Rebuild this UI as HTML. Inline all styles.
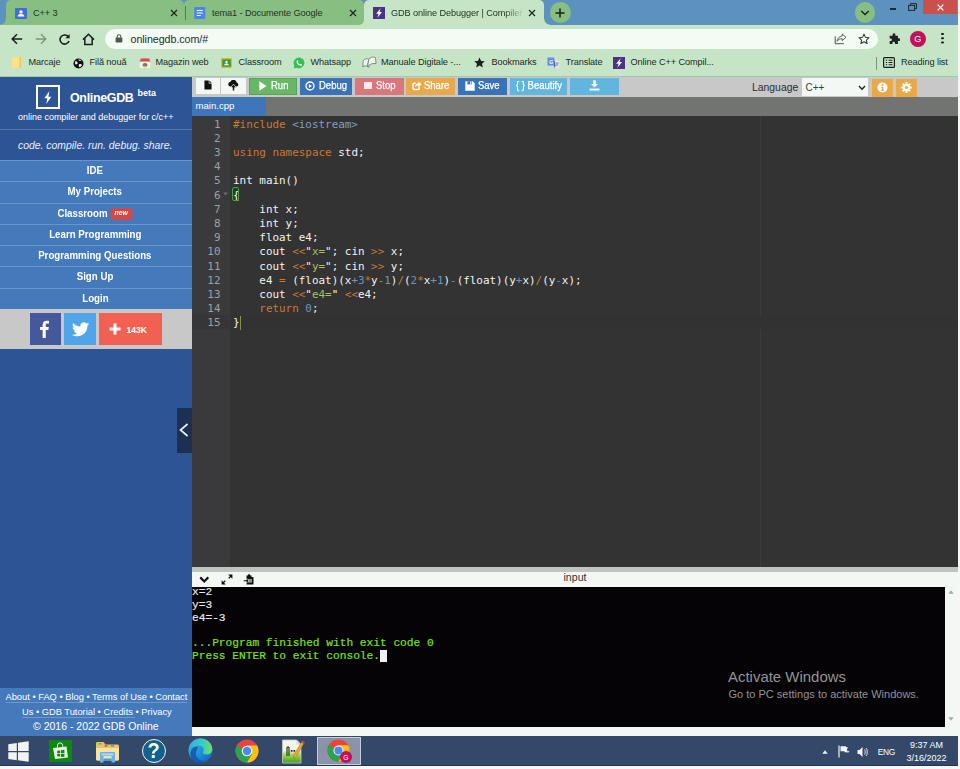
<!DOCTYPE html>
<html lang="en">
<head>
<meta charset="utf-8">
<title>GDB online Debugger | Compiler</title>
<style>
*{box-sizing:border-box;margin:0;padding:0}
html,body{width:960px;height:769px;overflow:hidden;background:#f5f8f5}
body{position:relative;font-family:"Liberation Sans",sans-serif;color:#222}
.abs{position:absolute}
.t{position:absolute;white-space:nowrap;line-height:1}
/* browser chrome */
#tabstrip{left:0;top:0;width:958px;height:26px;background:#5d92bf}
.tab{position:absolute;top:0;height:24.700px;background:#86bf81;border-radius:5px 5px 0 0}
.tab.active{background:#c6e5c6}
.tabtxt{position:absolute;top:7.700px;font-size:9.2px;color:#24331f;white-space:nowrap;line-height:11px;letter-spacing:-0.1px}
#toolbar{left:0;top:24.600px;width:958px;height:52.400px;background:#c6e5c6}
#omni{left:105px;top:28.5px;width:772.500px;height:20.5px;border-radius:10.5px;background:#f4faf4}
.bm{position:absolute;top:57.400px;font-size:9.2px;line-height:11px;color:#1d2a1d;white-space:nowrap;letter-spacing:-0.1px}
/* page */
#sidebar{left:0;top:77px;width:192px;height:659px;background:#2d5596}
#sidebar .menu{position:absolute;left:0;top:160px;width:192px}
.mi{position:absolute;left:0;width:192px;padding-right:2px;height:21.4px;background:#4479bb;border-top:1px solid #6a95ca;color:#fff;font-weight:bold;font-size:10.6px;text-align:center;line-height:19px;white-space:nowrap}
.mi>span{display:inline-block;transform:scaleX(0.917)}
#topbar{left:192px;top:77px;width:766px;height:19.900px;background:#c8c8c8}
.btn{position:absolute;top:78px;height:17px;color:#fff;font-size:10.2px;line-height:17px;white-space:nowrap;text-align:left}
.bt{top:80.300px;font-size:10.400px;color:#fff;line-height:12px;-webkit-text-stroke:0.250px #fff;transform:scaleX(0.913);transform-origin:0 50%}
#filetabs{left:192px;top:96.900px;width:766px;height:19.100px;background:#727472}
#editor{left:192px;top:116px;width:766px;height:450.5px;background:#333333}
#gutter{left:192px;top:116px;width:38px;height:450.5px;background:#3a3a3c}
.ln{position:absolute;left:192px;width:28.5px;text-align:right;color:#9da0a4;font-family:"DejaVu Sans Mono","Liberation Mono",monospace;font-size:10.930px;line-height:14.2px;height:14.2px;white-space:pre}
.cl{position:absolute;left:233px;color:#f2f2f2;font-family:"DejaVu Sans Mono","Liberation Mono",monospace;font-size:10.930px;line-height:14.2px;height:14.2px;white-space:pre}
.k{color:#cc7832}.s{color:#a5c261}.n{color:#6897bb}.h{color:#7d9fc4}
#console{left:192px;top:587px;width:753px;height:139.5px;background:#050306;overflow:hidden}
.co{position:absolute;left:0;font-family:"Liberation Mono",monospace;font-weight:normal;-webkit-text-stroke:0.180px currentColor;font-size:11.2px;line-height:12.75px;white-space:pre;color:#e8e8e8;margin-top:0.200px}
.g{color:#7be314}
.ft{font-size:9.300px;color:#fff;line-height:10.400px}
.ft span{display:inline-block;border-bottom:1px solid #7397cb}
#taskbar{left:0;top:736px;width:958px;height:30px;background:#34496a;border-bottom:1px solid #223458}
</style>
</head>
<body>
<!-- ============ BROWSER CHROME ============ -->
<div id="tabstrip" class="abs"></div>
<div id="toolbar" class="abs"></div>
<div class="tab" style="left:6px;width:178px"></div>
<div class="abs" style="left:0;top:18.700px;width:6px;height:6px;background:radial-gradient(circle at 0 0,rgba(134,191,129,0) 5.300px,#86bf81 6px)"></div>
<div class="abs" style="left:356px;top:17px;width:9px;height:8px;background:#c6e5c6"></div>
<div class="tab" style="left:184px;width:180px;border-radius:5px 5px 5px 0"></div>
<div class="tab active" style="left:364px;width:180px"></div>
<div class="abs" style="left:543.800px;top:18.800px;width:6px;height:6px;background:radial-gradient(circle at 100% 0,rgba(198,229,198,0) 5.300px,#c6e5c6 6px)"></div>
<div id="omni" class="abs"></div>


<!-- tab 1 -->
<svg class="abs" style="left:15px;top:7.5px" width="12" height="11" viewBox="0 0 12 11"><rect width="12" height="11" rx="1" fill="#3f6ed6"/><circle cx="6" cy="4" r="1.7" fill="#fff"/><path d="M2.6 8.6c0-1.7 1.6-2.5 3.4-2.5s3.4.8 3.4 2.5z" fill="#fff"/></svg>
<div class="tabtxt" style="left:33px">C++ 3</div>
<svg class="abs" style="left:169.5px;top:9px" width="8" height="8" viewBox="0 0 8 8"><path d="M1 1l6 6M7 1l-6 6" stroke="#1d2a1d" stroke-width="1.3"/></svg>
<div class="abs" style="left:184.5px;top:6px;width:1px;height:14px;background:#557a52"></div>
<!-- tab 2 -->
<svg class="abs" style="left:194.300px;top:6.600px" width="11.500" height="12" viewBox="0 0 11 12"><rect width="11" height="12" rx="1.2" fill="#4a86e8"/><path d="M2.5 3.5h6M2.5 6h6M2.5 8.5h4" stroke="#fff" stroke-width="1.1"/></svg>
<div class="tabtxt" style="left:212px">tema1 - Documente Google</div>
<svg class="abs" style="left:348.5px;top:9px" width="8" height="8" viewBox="0 0 8 8"><path d="M1 1l6 6M7 1l-6 6" stroke="#1d2a1d" stroke-width="1.3"/></svg>
<!-- tab 3 -->
<svg class="abs" style="left:373px;top:7px" width="12" height="12" viewBox="0 0 12 12"><rect width="12" height="12" fill="#4b3486"/><path d="M7.6 1.300L3.200 6.800h2.400L4.400 10.800l4.600-5.700H6.500z" fill="#fff"/></svg>
<div class="tabtxt" style="left:391px;width:131px;overflow:hidden;-webkit-mask-image:linear-gradient(90deg,#000 86%,rgba(0,0,0,.15) 100%);mask-image:linear-gradient(90deg,#000 86%,rgba(0,0,0,.15) 100%)">GDB online Debugger | Compiler</div>
<svg class="abs" style="left:527.5px;top:9px" width="8" height="8" viewBox="0 0 8 8"><path d="M1 1l6 6M7 1l-6 6" stroke="#1d2a1d" stroke-width="1.3"/></svg>
<!-- new tab -->
<div class="abs" style="left:549.600px;top:2px;width:21px;height:21px;border-radius:50%;background:#86bf81"></div>
<svg class="abs" style="left:555px;top:8px" width="10" height="10" viewBox="0 0 10 10"><path d="M5 0.5v9M0.5 5h9" stroke="#162016" stroke-width="1.5"/></svg>
<!-- tab search chevron -->
<div class="abs" style="left:854.5px;top:2.3px;width:20.5px;height:20.5px;border-radius:50%;background:#86bf81"></div>
<svg class="abs" style="left:860px;top:9.5px" width="10" height="6" viewBox="0 0 10 6"><path d="M1.2 1l3.8 3.6L8.8 1" stroke="#1a241a" stroke-width="1.4" fill="none"/></svg>
<!-- window controls -->
<div class="abs" style="left:889.5px;top:8px;width:6.5px;height:1.6px;background:#1b2733"></div>
<svg class="abs" style="left:907.5px;top:3px" width="9" height="8" viewBox="0 0 9 8"><path d="M2.5 2.3V0.6h6v5H6.8" stroke="#1b2733" stroke-width="1" fill="none"/><rect x="0.6" y="2.4" width="6" height="5" fill="#5d92bf" stroke="#1b2733" stroke-width="1"/></svg>
<div class="abs" style="left:922.5px;top:0;width:34px;height:14px;background:#c9504c"></div>
<svg class="abs" style="left:936.5px;top:3.5px" width="7" height="7" viewBox="0 0 7 7"><path d="M0.6 0.6l5.8 5.8M6.4 0.6L0.6 6.4" stroke="#fff" stroke-width="1.3"/></svg>
<!-- nav icons -->
<svg class="abs" style="left:10.5px;top:33px" width="12" height="12" viewBox="0 0 12 12"><path d="M11.2 6H1.6M6 1.2L1.2 6 6 10.8" stroke="#1b1f1b" stroke-width="1.5" fill="none"/></svg>
<svg class="abs" style="left:34.5px;top:33px" width="12" height="12" viewBox="0 0 12 12"><path d="M0.8 6h9.6M6 1.2L10.8 6 6 10.8" stroke="#7f9381" stroke-width="1.4" fill="none"/></svg>
<svg class="abs" style="left:58px;top:32.5px" width="13" height="13" viewBox="0 0 13 13"><path d="M10.6 4.2A4.6 4.6 0 1 0 11 8" stroke="#1b1f1b" stroke-width="1.6" fill="none"/><path d="M11.6 1v4.2H7.4z" fill="#1b1f1b"/></svg>
<svg class="abs" style="left:81.5px;top:32.5px" width="13" height="13" viewBox="0 0 13 13"><path d="M1 6.6L6.5 1.2 12 6.6M2.8 5.6v6h7.4v-6" stroke="#1b1f1b" stroke-width="1.5" fill="none"/></svg>
<!-- omnibox content -->
<svg class="abs" style="left:114.5px;top:34px" width="8" height="9" viewBox="0 0 8 9"><rect x="0.6" y="3.6" width="6.8" height="5" rx="0.8" fill="#4f5750"/><path d="M2.2 3.8V2.6a1.8 1.8 0 0 1 3.6 0v1.2" stroke="#4f5750" stroke-width="1.1" fill="none"/></svg>
<div class="t" style="left:130.500px;top:32.800px;font-size:10.700px;color:#262b26;line-height:12px;letter-spacing:-0.05px">onlinegdb.com/#</div>
<svg class="abs" style="left:834px;top:33px" width="13" height="12" viewBox="0 0 13 12"><path d="M1.200 3.300v7.400h8.600" stroke="#4c544c" stroke-width="1" fill="none"/><path d="M8.200 1l3.800 3.300-3.800 3.300V5.700C6 5.700 4.200 6.500 3 8.300c.4-2.800 2.200-4.900 5.200-5.300z" stroke="#4c544c" stroke-width=".9" fill="none" stroke-linejoin="round"/></svg>
<svg class="abs" style="left:858px;top:33px" width="12" height="12" viewBox="0 0 13 13"><path d="M6.5 1.2l1.6 3.5 3.8.4-2.8 2.6.8 3.8-3.4-2-3.4 2 .8-3.8L1.100 5.100l3.800-.4z" stroke="#2b332b" stroke-width="1.1" fill="none" stroke-linejoin="round"/></svg>
<svg class="abs" style="left:888px;top:32.700px" width="12" height="12" viewBox="0 0 13 13"><path d="M5 1.8a1.500 1.500 0 0 1 3 0V3h2.800v2.800h1a1.500 1.500 0 0 1 0 3h-1V12H7.600v-1a1.400 1.400 0 0 0-2.800 0v1H1.800V8.800h1a1.400 1.400 0 0 0 0-2.800h-1V3H5z" fill="#1f241f"/></svg>
<div class="abs" style="left:910px;top:30.7px;width:16.400px;height:16.400px;border-radius:50%;background:#c30f5c"></div>
<div class="t" style="left:914.300px;top:34.300px;font-size:9.200px;color:#fff;line-height:10px">G</div>
<div class="abs" style="left:941.400px;top:33.200px;width:2.200px;height:2.200px;border-radius:50%;background:#1b1f1b;box-shadow:0 4.200px 0 #1b1f1b,0 8.400px 0 #1b1f1b"></div>
<!-- bookmarks -->
<svg class="abs" style="left:12px;top:57px" width="9" height="11" viewBox="0 0 9 11"><rect width="9" height="11" rx="1" fill="#fbe08e"/><rect x="7.5" width="1.500" height="11" fill="#f2c64d"/></svg>
<div class="bm" style="left:28.500px">Marcaje</div>
<svg class="abs" style="left:72.500px;top:57.500px" width="11" height="11" viewBox="0 0 11 11"><circle cx="5.500" cy="5.500" r="5" fill="#111"/><path d="M2 3.500c1.500-.5 2.500.3 2.600 1.500.1 1-1 1.500-2.400 1.200zM6 6.200c1-.6 2.600-.3 3 .8-.5 1.300-1.600 2-2.600 2.200-.6-.8-.8-2-.4-3zM5.500 1.500c1-.3 2.200 0 3 .8-.6.600-1.800.8-2.800.2z" fill="#e7f3e7"/></svg>
<div class="bm" style="left:89.500px">Filă nouă</div>
<svg class="abs" style="left:139px;top:57px" width="12" height="12" viewBox="0 0 12 12"><path d="M0.800 4.500h10.400v6.500H0.800z" fill="#eef1ee"/><path d="M0.500 4.500L2 1.500h8l1.500 3z" fill="#d94c3f"/><circle cx="6" cy="8.200" r="2.300" fill="#f0b429"/><path d="M6 5.900a2.300 2.300 0 0 1 2 3.400L6 8.200z" fill="#d94c3f"/><path d="M4 9.300A2.300 2.300 0 0 1 6 5.900v2.300z" fill="#3c9c4a"/><circle cx="6" cy="8.200" r="1" fill="#4a7de0"/></svg>
<div class="bm" style="left:155.500px">Magazin web</div>
<svg class="abs" style="left:221px;top:57.500px" width="11" height="10" viewBox="0 0 11 10"><rect width="11" height="10" rx="1" fill="#f0b711"/><rect x="1.300" y="1.300" width="8.400" height="7.400" fill="#2f9a50"/><circle cx="5.500" cy="4" r="1.200" fill="#fff"/><path d="M3.200 7.200c0-1.200 1-1.700 2.300-1.700s2.300.5 2.300 1.700z" fill="#fff"/></svg>
<div class="bm" style="left:238.500px">Classroom</div>
<svg class="abs" style="left:293px;top:57px" width="12" height="12" viewBox="0 0 12 12"><path d="M6 0.500a5.400 5.400 0 0 0-4.600 8.200L0.600 11.500l2.900-.8A5.400 5.400 0 1 0 6 0.500z" fill="#2fc152"/><path d="M4 3.300c.4-.3.800-.2 1 .3l.4.900c.1.300-.4.600-.4.900.3.800 1.200 1.600 1.900 1.800.3 0 .6-.6.900-.5l.9.500c.4.200.4.600.1 1-1 1.200-3 .3-4.100-.9C3.500 6 3.200 4.200 4 3.300z" fill="#fff"/></svg>
<div class="bm" style="left:310.500px">Whatsapp</div>
<svg class="abs" style="left:362px;top:56px" width="15" height="13" viewBox="0 0 15 13"><path d="M6.800 3.200C5 2.200 2.800 2.800 1.200 4.800L0.800 11c1.500-1.300 3.200-1.600 4.700-.7z" fill="#eef4ec" stroke="#6d776b" stroke-width=".8" stroke-linejoin="round"/><path d="M6.800 3.200C8.200 1.200 11 .6 13.500 1.500l.5 6.200c-2.500-.8-6 .3-8.500 2.600z" fill="#eef4ec" stroke="#6d776b" stroke-width=".8" stroke-linejoin="round"/><path d="M5.500 10.300l1 1.200 1.200-1.700" stroke="#6d776b" stroke-width=".8" fill="none"/></svg>
<div class="bm" style="left:381px">Manuale Digitale -...</div>
<svg class="abs" style="left:473.500px;top:57px" width="11" height="11" viewBox="0 0 11 11"><path d="M5.500 0.400l1.600 3.500 3.700.4-2.800 2.500.8 3.800-3.300-2-3.300 2 .8-3.800L0.200 4.300l3.700-.4z" fill="#1b1f1b"/></svg>
<div class="bm" style="left:491.500px">Bookmarks</div>
<svg class="abs" style="left:547px;top:57px" width="13" height="12" viewBox="0 0 13 12"><path d="M0.500 0.500h6.500l1.500 8H0.500z" fill="#5b8def"/><path d="M6 3.500h6.500v8H7.500z" fill="#dfe6ee"/><path d="M6 3.500h1.500l1 5.000-1 3z" fill="#3c64b8"/><text x="2" y="6.500" font-family="Liberation Sans,sans-serif" font-size="5.500" font-weight="bold" fill="#fff">G</text><path d="M8.500 6h3M10 5.500v.5M9 6c.3 1.500 1.200 2.500 2.300 3M11 6c-.3 1.500-1.200 2.500-2.300 3" stroke="#6d7a88" stroke-width=".6" fill="none"/></svg>
<div class="bm" style="left:565.500px">Translate</div>
<svg class="abs" style="left:612.500px;top:57px" width="12" height="12" viewBox="0 0 12 12"><rect width="12" height="12" fill="#4b3486"/><path d="M7.6 1.300L3.200 6.800h2.400L4.400 10.800l4.600-5.700H6.500z" fill="#fff"/></svg>
<div class="bm" style="left:630.500px">Online C++ Compil...</div>
<div class="abs" style="left:875.500px;top:56.500px;width:1px;height:13px;background:#7c947d"></div>
<svg class="abs" style="left:882.500px;top:57px" width="12" height="11" viewBox="0 0 12 11"><rect x="0.600" y="0.600" width="10.800" height="9.800" rx="1" fill="none" stroke="#1b1f1b" stroke-width="1.200"/><path d="M2.800 3.200h1.400M2.800 5.500h1.400M2.800 7.800h1.400M5.600 3.200h3.800M5.600 5.500h3.800M5.600 7.800h3.800" stroke="#1b1f1b" stroke-width="1.100"/></svg>
<div class="bm" style="left:901px">Reading list</div>
<div class="abs" style="left:0;top:76px;width:958px;height:1px;background:#a3c8b0"></div>

<!-- ============ PAGE ============ -->
<div id="sidebar" class="abs"></div>

<!-- sidebar content -->
<div class="abs" style="left:35.800px;top:85px;width:24.600px;height:24px;border:2px solid #fff"></div>
<svg class="abs" style="left:42.300px;top:89.500px" width="11.500" height="15" viewBox="0 0 10 14"><path d="M6.600 1L1.800 7.600h2.800L3.600 13l4.800-6.800H5.600z" fill="#fff"/></svg>
<div class="t" id="brand" style="left:70px;top:90.500px;font-size:12.500px;letter-spacing:-0.350px;font-weight:bold;color:#fff;line-height:15px">OnlineGDB</div>
<div class="t" id="beta" style="left:137.500px;top:88px;font-size:9px;font-weight:bold;color:#fff;line-height:11px">beta</div>
<div class="t" id="sub1" style="left:18px;top:111.500px;font-size:8.980px;color:#fff;line-height:11px">online compiler and debugger for c/c++</div>
<div class="abs" style="left:0;top:129px;width:192px;height:1px;background:#5877ab"></div>
<div class="t" id="sub2" style="left:18px;top:139px;font-size:10.420px;font-style:italic;color:#e9eef6;line-height:13px">code. compile. run. debug. share.</div>
<div class="mi" style="top:160.10px"><span>IDE</span></div>
<div class="mi" style="top:181.37px"><span>My Projects</span></div>
<div class="mi" style="top:202.64px"><span>Classroom <span style="display:inline-block;background:#d0494b;border-radius:2px;font-size:7.500px;font-style:italic;line-height:10.500px;height:11.200px;padding:0 5px 0 4.600px;vertical-align:1.200px">new</span></span></div>
<div class="mi" style="top:223.91px"><span>Learn Programming</span></div>
<div class="mi" style="top:245.18px"><span>Programming Questions</span></div>
<div class="mi" style="top:266.45px"><span>Sign Up</span></div>
<div class="mi" style="top:287.72px"><span>Login</span></div>
<div class="abs" style="left:0;top:309.200px;width:192px;height:39.800px;background:#c8c8c8"></div>
<div class="abs" style="left:30px;top:313px;width:31.300px;height:32px;background:#44589b"></div>
<svg class="abs" style="left:38.200px;top:319.800px" width="12" height="18.500" viewBox="0 0 12 19"><path d="M7.800 18.500V10.300h2.700l.4-3.100H7.800V5.200c0-.9.300-1.500 1.600-1.500h1.700V.900C10.800.860 9.800.800 8.700.800 6.300.800 4.600 2.200 4.600 4.900v2.300H1.900v3.100h2.700v8.200z" fill="#fff"/></svg>
<div class="abs" style="left:64.200px;top:313px;width:31.800px;height:32px;background:#4ea5e9"></div>
<svg class="abs" style="left:71.800px;top:322.200px" width="17.500" height="14.600" viewBox="0 0 24 20"><path d="M23.600 2.600c-.9.400-1.800.6-2.800.8 1-.6 1.800-1.500 2.100-2.700-.900.600-2 1-3.100 1.200A4.800 4.800 0 0 0 16.300.400c-2.700 0-4.800 2.200-4.800 4.800 0 .4 0 .8.100 1.100C7.600 6.100 4 4.200 1.600 1.300c-.400.700-.600 1.500-.600 2.400 0 1.700.900 3.100 2.100 4-.800 0-1.500-.2-2.200-.6v.1c0 2.300 1.700 4.300 3.900 4.700-.400.100-.800.200-1.300.200-.3 0-.6 0-.900-.100.600 1.900 2.400 3.300 4.500 3.400a9.700 9.700 0 0 1-7.100 2c2.100 1.400 4.700 2.200 7.400 2.200 8.900 0 13.700-7.300 13.700-13.700v-.600c.9-.700 1.700-1.500 2.400-2.500z" fill="#fff"/></svg>
<div class="abs" style="left:99px;top:313px;width:63px;height:32px;background:#f16051"></div>
<svg class="abs" style="left:108.500px;top:323px" width="12" height="12" viewBox="0 0 12 12"><path d="M6 0.500v11M0.500 6h11" stroke="#fff" stroke-width="3"/></svg>
<div class="t" id="k143" style="left:126.500px;top:324.500px;font-size:8.600px;font-weight:bold;color:#fff;line-height:10px">143K</div>
<!-- sidebar toggle -->
<div class="abs" style="left:177px;top:408px;width:15px;height:44.500px;background:#1d3052"></div>
<svg class="abs" style="left:178.500px;top:423px" width="10" height="14" viewBox="0 0 10 14"><path d="M8.600 1L1.500 7l7.100 6" stroke="#e4f0ff" stroke-width="1.700" fill="none"/></svg>
<!-- sidebar footer -->
<div class="abs" style="left:0;top:687.500px;width:192px;height:48.500px;background:#4479bb"></div>
<div class="t ft" id="f1" style="left:5.500px;top:691.600px"><span>About • FAQ • Blog • Terms of Use • Contact</span></div>
<div class="t ft" id="f2" style="left:22px;top:706.600px"><span>Us • GDB Tutorial • Credits&nbsp;</span>• Privacy</div>
<div class="t" id="f3" style="left:33px;top:720px;font-size:10.500px;color:#fff;line-height:12px">© 2016 - 2022 GDB Online</div>
<div id="topbar" class="abs"></div>
<div id="filetabs" class="abs"></div>

<!-- toolbar buttons -->
<div class="abs" style="left:195.500px;top:78.300px;width:24.500px;height:16px;background:#f4f8f4"></div>
<svg class="abs" style="left:203.700px;top:80px" width="8" height="10" viewBox="0 0 9 11"><path d="M0.500 0.300h4.800v3.400h3.200v7H0.500z" fill="#111"/><path d="M6 0.300l2.500 2.700H6z" fill="#111"/></svg>
<div class="abs" style="left:220.500px;top:78.300px;width:25px;height:16px;background:#f4f8f4"></div>
<svg class="abs" style="left:226.500px;top:80px" width="13" height="12" viewBox="0 0 13 12"><path d="M3 6.500a2.400 2.400 0 0 1 .4-4.700A3.300 3.300 0 0 1 9.700 2.500a2.100 2.100 0 0 1 .3 4z" fill="#111"/><path d="M6.500 4.200L3.600 7.600h1.800v3.200h2.200V7.600h1.800z" fill="#111" stroke="#f4f8f4" stroke-width=".7"/></svg>
<div class="btn" style="left:248.800px;width:48.400px;background:#68b766;border:1px solid #52a852"></div>
<svg class="abs" style="left:258.800px;top:80.500px" width="8" height="10" viewBox="0 0 8 10"><path d="M0.300 0.300L7.600 5 0.300 9.700z" fill="#fff"/></svg>
<div class="t bt" id="b1" style="left:270.500px">Run</div>
<div class="btn" style="left:300px;width:52px;background:#3a72b8"></div>
<svg class="abs" style="left:305.300px;top:80.500px" width="10" height="10" viewBox="0 0 10 10"><circle cx="5" cy="5" r="4" stroke="#fff" stroke-width="1.300" fill="none"/><path d="M3.900 3l3 2-3 2z" fill="#fff"/></svg>
<div class="t bt" id="b2" style="left:318.700px">Debug</div>
<div class="btn" style="left:355px;width:48.800px;background:#d8787c"></div>
<div class="abs" style="left:364.300px;top:81.500px;width:7.500px;height:7.500px;background:#faecec"></div>
<div class="t bt" id="b3" style="left:375.500px;color:#fbeeee">Stop</div>
<div class="btn" style="left:406.300px;width:48.800px;background:#e8a94a"></div>
<svg class="abs" style="left:412px;top:80.500px" width="10" height="10" viewBox="0 0 10 10"><path d="M7.200 5.800v1.800c0 .6-.4 1-1 1H2c-.6 0-1-.4-1-1V3.200c0-.6.400-1 1-1h1.600" stroke="#fff" stroke-width="1.500" fill="none"/><path d="M6.200 0.400L9.700 3.300 6.200 6.200V4.400C4.600 4.400 3.600 5 3 6.300 3.100 4 4.200 2.400 6.200 2.200z" fill="#fff"/></svg>
<div class="t bt" id="b4" style="left:424.300px">Share</div>
<div class="btn" style="left:458.300px;width:48.800px;background:#3a72b8"></div>
<svg class="abs" style="left:465px;top:80.500px" width="10" height="10" viewBox="0 0 10 10"><path d="M0.300 0.300h7.400l2 2v7.400H0.300z" fill="#fff"/><rect x="2.400" y="0.300" width="4.600" height="3" fill="#3a72b8"/><rect x="5.200" y="0.700" width="1.200" height="2.200" fill="#fff"/></svg>
<div class="t bt" id="b5" style="left:478px">Save</div>
<div class="btn" style="left:510px;width:57px;background:#62b5dd"></div>
<div class="t bt" id="b6" style="left:515.500px">{ } Beautify</div>
<div class="btn" style="left:570px;width:48.800px;background:#62b5dd"></div>
<svg class="abs" style="left:589px;top:80px" width="11" height="11" viewBox="0 0 11 11"><path d="M4.200 0.300h2.600v3.700h2.200L5.500 7.600 2 4h2.200z" fill="#fff"/><rect x="0.600" y="8.600" width="9.800" height="1.900" fill="#fff"/></svg>
<div class="t" id="lang" style="left:752px;top:81.500px;font-size:10.400px;color:#2c2c2c;line-height:12px">Language</div>
<div class="abs" style="left:802px;top:78.300px;width:66px;height:18.200px;background:#f4f8f4"></div>
<div class="t" id="cpp" style="left:805.500px;top:81.800px;font-size:10px;color:#3c3c3c;line-height:12px">C++</div>
<svg class="abs" style="left:857.500px;top:85px" width="8" height="6" viewBox="0 0 8 6"><path d="M1 1l3 3.200L7 1" stroke="#222" stroke-width="1.400" fill="none"/></svg>
<div class="abs" style="left:872px;top:79px;width:20.500px;height:18px;background:#e8a94a"></div>
<svg class="abs" style="left:877px;top:81.700px" width="11" height="11" viewBox="0 0 11 11"><circle cx="5.500" cy="5.500" r="5" fill="#fff"/><circle cx="5.500" cy="3" r="1" fill="#e8a94a"/><path d="M4.300 4.800h2v3h.7v1H4.100v-1h.8v-2h-.6z" fill="#e8a94a"/></svg>
<div class="abs" style="left:895.500px;top:79px;width:21.300px;height:18px;background:#e8a94a"></div>
<svg class="abs" style="left:900.500px;top:81.700px" width="11" height="11" viewBox="0 0 11 11"><g fill="#fff"><circle cx="5.500" cy="5.500" r="3.700"/><rect x="4.500" y="0.200" width="2" height="10.600"/><rect x="0.200" y="4.500" width="10.600" height="2"/><rect x="4.500" y="0.200" width="2" height="10.600" transform="rotate(45 5.500 5.500)"/><rect x="4.500" y="0.200" width="2" height="10.600" transform="rotate(-45 5.500 5.500)"/></g><circle cx="5.500" cy="5.500" r="1.600" fill="#e8a94a"/></svg>
<!-- file tab -->
<div class="abs" style="left:192px;top:96.900px;width:74.200px;height:19.100px;background:#3f76ba"></div>
<div class="t" id="maincpp" style="left:195.500px;top:100.300px;font-size:9.600px;color:#fff;line-height:11px">main.cpp</div>
<div id="editor" class="abs"></div>
<div id="gutter" class="abs"></div>

<div class="abs" style="left:760px;top:116px;width:1px;height:450.500px;background:#3c3c40"></div>
<div class="abs" style="left:231px;top:315.100px;width:727px;height:14.200px;background:#323232"></div>
<div class="abs" style="left:192px;top:315.100px;width:38.500px;height:14.200px;background:#363638"></div>
<!-- code -->
<div class="ln" style="top:117.50px">1</div>
<div class="cl" style="top:117.50px"><span class="k">#include</span> <span class="h">&lt;iostream&gt;</span></div>
<div class="ln" style="top:131.70px">2</div>
<div class="ln" style="top:145.90px">3</div>
<div class="cl" style="top:145.90px"><span class="k">using</span> <span class="k">namespace</span> std;</div>
<div class="ln" style="top:160.10px">4</div>
<div class="ln" style="top:174.30px">5</div>
<div class="cl" style="top:174.30px">int main()</div>
<div class="ln" style="top:188.50px">6</div>
<div class="cl" style="top:188.50px">{</div>
<div class="ln" style="top:202.70px">7</div>
<div class="cl" style="top:202.70px">    int x;</div>
<div class="ln" style="top:216.90px">8</div>
<div class="cl" style="top:216.90px">    int y;</div>
<div class="ln" style="top:231.10px">9</div>
<div class="cl" style="top:231.10px">    float e4;</div>
<div class="ln" style="top:245.30px">10</div>
<div class="cl" style="top:245.30px">    cout <span class="k">&lt;&lt;</span>"<span class="s">x=</span>"; cin <span class="k">&gt;&gt;</span> x;</div>
<div class="ln" style="top:259.50px">11</div>
<div class="cl" style="top:259.50px">    cout <span class="k">&lt;&lt;</span>"<span class="s">y=</span>"; cin <span class="k">&gt;&gt;</span> y;</div>
<div class="ln" style="top:273.70px">12</div>
<div class="cl" style="top:273.70px">    e4 <span class="k">=</span> (float)(x<span class="n">+3</span><span class="k">*</span>y<span class="n">-1</span>)<span class="k">/</span>(<span class="n">2</span><span class="k">*</span>x<span class="n">+1</span>)<span class="n">-</span>(float)(y<span class="n">+</span>x)<span class="k">/</span>(y<span class="n">-</span>x);</div>
<div class="ln" style="top:287.90px">13</div>
<div class="cl" style="top:287.90px">    cout <span class="k">&lt;&lt;</span>"<span class="s">e4=</span>" <span class="k">&lt;&lt;</span>e4;</div>
<div class="ln" style="top:302.10px">14</div>
<div class="cl" style="top:302.10px">    <span class="k">return</span> <span class="n">0</span>;</div>
<div class="ln" style="top:316.30px">15</div>
<div class="cl" style="top:316.30px">}</div>
<svg class="abs" style="left:223px;top:192px" width="5" height="4" viewBox="0 0 5 4"><path d="M0.300 0.500h4.400L2.500 3.500z" fill="#6c6f72"/></svg>
<div class="abs" style="left:232.200px;top:187.300px;width:7px;height:14px;border:1px solid #3fa33f;border-radius:2px"></div>
<div class="abs" style="left:239.600px;top:316.300px;width:1px;height:13.500px;background:#7f9645"></div>

<!-- bottom panel -->
<div class="abs" style="left:192px;top:566.500px;width:766px;height:5.500px;background:#c0c4c0"></div>
<div class="abs" style="left:192px;top:572px;width:766px;height:164px;background:#f4f8f4"></div>
<svg class="abs" style="left:198.800px;top:575.800px" width="10.500" height="8" viewBox="0 0 9 7"><path d="M1 1.200l3.500 3.600L8 1.200" stroke="#111" stroke-width="1.900" fill="none"/></svg>
<svg class="abs" style="left:221px;top:574px" width="12" height="11" viewBox="0 0 12 11"><path d="M7.200 0.600h4.200v4.200zM0.600 10.400V6.200l4.200 4.200z" fill="#111"/><path d="M10.600 1.400L7.800 4.200M1.400 9.600l2.800-2.800" stroke="#111" stroke-width="1.300"/></svg>
<svg class="abs" style="left:243.200px;top:573.100px" width="11" height="12" viewBox="0 0 11 12"><path d="M3.500 2.500h1.200a1.300 1.300 0 0 1 2.600 0h1.200v1.500h2v7.500h-7z" fill="#111"/><path d="M0.500 7h3v-1.600l2.600 2.400-2.600 2.400V8.600h-3z" fill="#111" stroke="#f4f8f4" stroke-width=".5"/><rect x="5" y="6" width="4" height="3.600" fill="#f4f8f4" opacity=".55"/></svg>
<div class="t" id="inp" style="left:563.500px;top:571.800px;font-size:10.600px;color:#333;line-height:11px">input</div>
<div id="console" class="abs">
<div class="co" style="top:-1px">x=2</div>
<div class="co" style="top:11.750px">y=3</div>
<div class="co" style="top:24.500px">e4=-3</div>
<div class="co g" style="top:50px">...Program finished with exit code 0</div>
<div class="co g" style="top:62.750px">Press ENTER to exit console.</div>
<div class="abs" style="left:188px;top:63px;width:6.600px;height:12px;background:#f2f2f2"></div>
</div>
<svg class="abs" style="left:948px;top:590px" width="6" height="4" viewBox="0 0 6 4"><path d="M3 0.300L5.700 3.700H0.300z" fill="#a3a9b3"/></svg>
<svg class="abs" style="left:948px;top:717px" width="6" height="4" viewBox="0 0 6 4"><path d="M3 3.700L5.700 0.300H0.300z" fill="#a3a9b3"/></svg>
<div class="t" id="aw1" style="left:728px;top:669.200px;font-size:14.960px;color:#939397;line-height:16px">Activate Windows</div>
<div class="t" id="aw2" style="left:728.500px;top:688px;font-size:11.030px;color:#939397;line-height:12px">Go to PC settings to activate Windows.</div>

<div id="taskbar" class="abs"></div>
<!-- taskbar icons -->
<svg class="abs" style="left:8px;top:740.500px" width="21" height="21" viewBox="0 0 21 21"><path d="M0.300 3.200L8.800 2v8H0.300zM10 1.800L20.700 0.300V10H10zM0.300 11.200h8.500v8L0.300 18zM10 11.200h10.700v9.600L10 19.300z" fill="#f2f4f2"/></svg>
<div class="abs" style="left:49px;top:740px;width:22.700px;height:21.700px;background:#0b8a0e"></div>
<svg class="abs" style="left:52px;top:741.500px" width="17" height="18" viewBox="0 0 17 18"><path d="M1 6l13.500-1.500 1.500 11L3 17z" fill="#e8f4e4"/><path d="M5.500 5.500V3.800a2.600 2.600 0 0 1 5.200-.6v1.600" stroke="#e8f4e4" stroke-width="1" fill="none"/><path d="M5.200 8.800l3-.4v2.600h-3zM9 8.300l3.400-.5v3.200H9zM5.200 11.800h3v2.800l-3-.3zM9 11.800h3.400v3.200L9 14.700z" fill="#0b8a0e"/></svg>
<svg class="abs" style="left:95px;top:741px" width="25" height="22" viewBox="0 0 25 22"><path d="M1 2.500c0-.8.600-1.500 1.500-1.500h6l2 2.500h12c.8 0 1.500.6 1.500 1.500v13c0 .8-.6 1.500-1.500 1.500h-20c-.8 0-1.500-.6-1.500-1.500z" fill="#e9c35f"/><rect x="3.500" y="2.200" width="3" height="1.300" fill="#45b153"/><rect x="9.500" y="4.200" width="3" height="1.300" fill="#d84a3a"/><rect x="16" y="4.200" width="3" height="1.300" fill="#3f8fe0"/><path d="M1 7h23v11c0 .8-.6 1.500-1.500 1.500h-20c-.8 0-1.500-.6-1.500-1.500z" fill="#f7e3a1"/><path d="M5 12c0-.6.400-1 1-1h13c.6 0 1 .400 1 1v9.500h-3.500V15h-8v6.500H5z" fill="#69b3e8"/><rect x="6.500" y="12.500" width="12" height="1.800" fill="#b9dcf5"/><rect x="8.500" y="17.500" width="8" height="2.500" fill="#4b9ad9"/></svg>
<div class="abs" style="left:141.500px;top:739px;width:24px;height:24px;border-radius:50%;background:#0f618e;border:1.600px solid #f1f4f6"></div>
<div class="t" id="q" style="left:147.300px;top:740.300px;font-size:22px;font-weight:bold;color:#fff;line-height:22px;transform:scaleX(.92);transform-origin:50% 50%">?</div>
<svg class="abs" style="left:187.500px;top:737.500px" width="25" height="25" viewBox="0 0 25 25"><defs><linearGradient id="eg1" x1="0" y1="0" x2="1" y2="1"><stop offset="0" stop-color="#37c6d0"/><stop offset=".6" stop-color="#1d8bd8"/><stop offset="1" stop-color="#1259b5"/></linearGradient><linearGradient id="eg2" x1="0" y1="0" x2="1" y2="0"><stop offset="0" stop-color="#2fb4ea"/><stop offset=".6" stop-color="#3accc4"/><stop offset="1" stop-color="#74dc5c"/></linearGradient></defs><circle cx="12.500" cy="12.500" r="12" fill="url(#eg1)"/><path d="M1 11C2 4.500 7 .500 12.500.500c6.500 0 11.800 5 11.800 10.500 0 3.500-2.500 5.500-5.500 5.500-2.500 0-4-1-4-2 0-.800 1-1.200 1-3 0-2-2-4-5-4C6.500 7.500 2.500 8.500 1 11z" fill="url(#eg2)"/><path d="M9 12c-1.500 2-1.500 5 0 7.500 2 3 5.500 4 9 2.500-4 3.500-10 3-13.500-.5C2 18.500 1.500 14 4 11c1.500-1.800 3.800-2.500 6-2-.5.800-.7 1.800-1 3z" fill="#1554ad" opacity=".85"/></svg>
<svg class="abs" style="left:234.500px;top:739px" width="24" height="24" viewBox="0 0 24 24"><circle cx="12" cy="12" r="11.500" fill="#e8453c"/><path d="M12 12L2.040 6.250A11.500 11.500 0 0 0 12 23.500l5-8.500z" fill="#2ba24c"/><path d="M12 12h11.500A11.500 11.500 0 0 1 12 23.500l5-8.700z" fill="#fbc116"/><path d="M12 6.500h10.200A11.500 11.500 0 0 1 23.500 12H12z" fill="#fbc116"/><circle cx="12" cy="12" r="5.300" fill="#f3f6f3"/><circle cx="12" cy="12" r="4.200" fill="#4a8af4"/></svg>
<svg class="abs" style="left:281.500px;top:738.500px" width="24" height="25" viewBox="0 0 24 25"><defs><linearGradient id="np" x1="0" y1="0" x2="0" y2="1"><stop offset="0" stop-color="#f4f6ee"/><stop offset=".45" stop-color="#f1f5e6"/><stop offset=".62" stop-color="#a9dc5c"/><stop offset="1" stop-color="#3f9d1c"/></linearGradient></defs><path d="M0.500 1h14l4.500 4.500v18.500H0.500z" fill="url(#np)" stroke="#c9cfc0" stroke-width=".8"/><path d="M14.500 1v4.500h4.500z" fill="#d5dbd0"/><path d="M5 8v9M7 8v9M5 8h2" stroke="#222" stroke-width="1.100" fill="none"/><rect x="8.800" y="11" width="1.700" height="1.700" fill="#222"/><rect x="11.500" y="11" width="1.700" height="1.700" fill="#222"/><path d="M20.300 1.800l2.300 1.400-8.600 14.600-2.800 1.800.5-3.200z" fill="#f0a53a" stroke="#9a641e" stroke-width=".5"/><path d="M20.300 1.800l2.300 1.400-1 1.700-2.300-1.400z" fill="#c9443c"/></svg>
<div class="abs" style="left:317.300px;top:737px;width:43.500px;height:28px;background:#8a93a7;border:1px solid #c6ccd8"></div>
<svg class="abs" style="left:327px;top:738.500px" width="23" height="23" viewBox="0 0 24 24"><circle cx="12" cy="12" r="11.500" fill="#e8453c"/><path d="M12 12L2.040 6.250A11.500 11.500 0 0 0 12 23.500l5-8.500z" fill="#2ba24c"/><path d="M12 12h11.500A11.500 11.500 0 0 1 12 23.500l5-8.700z" fill="#fbc116"/><path d="M12 6.500h10.200A11.500 11.500 0 0 1 23.500 12H12z" fill="#fbc116"/><circle cx="12" cy="12" r="5.300" fill="#f3f6f3"/><circle cx="12" cy="12" r="4.200" fill="#4a8af4"/></svg>
<div class="abs" style="left:339.500px;top:750.500px;width:12.500px;height:12.500px;border-radius:50%;background:#c30f5c"></div>
<div class="t" style="left:343.200px;top:753.500px;font-size:6.500px;color:#fff;line-height:7px">G</div>
<!-- tray -->
<svg class="abs" style="left:821.500px;top:749.500px" width="6" height="4" viewBox="0 0 6 4"><path d="M3 0.300L5.700 3.700H0.300z" fill="#f1f3f5"/></svg>
<svg class="abs" style="left:837.500px;top:745px" width="12" height="13" viewBox="0 0 12 13"><path d="M1 0.500v12" stroke="#f1f3f5" stroke-width="1.200"/><path d="M2.500 1.200h5.500v1h2l-1.200 2.500 1.200 2.500H6.500v-1H2.500z" fill="#f1f3f5"/><path d="M9.500 5.500l2 1.200-2 1.200z" fill="#f1f3f5"/></svg>
<svg class="abs" style="left:857px;top:746px" width="12" height="12" viewBox="0 0 12 12"><path d="M0.500 4h2L5.500 1v10L2.500 8h-2z" fill="#f1f3f5"/><path d="M7.500 3.500c1 1.200 1 3.800 0 5M9 2c1.800 2 1.800 6 0 8" stroke="#f1f3f5" stroke-width=".9" fill="none"/></svg>
<div class="t" id="eng" style="left:877.800px;top:746.500px;font-size:8.400px;letter-spacing:-0.300px;color:#fff;line-height:10px">ENG</div>
<div class="t" id="tm" style="left:910px;top:740px;font-size:9px;color:#fff;line-height:10px">9:37 AM</div>
<div class="t" id="dt" style="left:906.500px;top:753px;font-size:9px;color:#fff;line-height:10px">3/16/2022</div>

</body>
</html>
